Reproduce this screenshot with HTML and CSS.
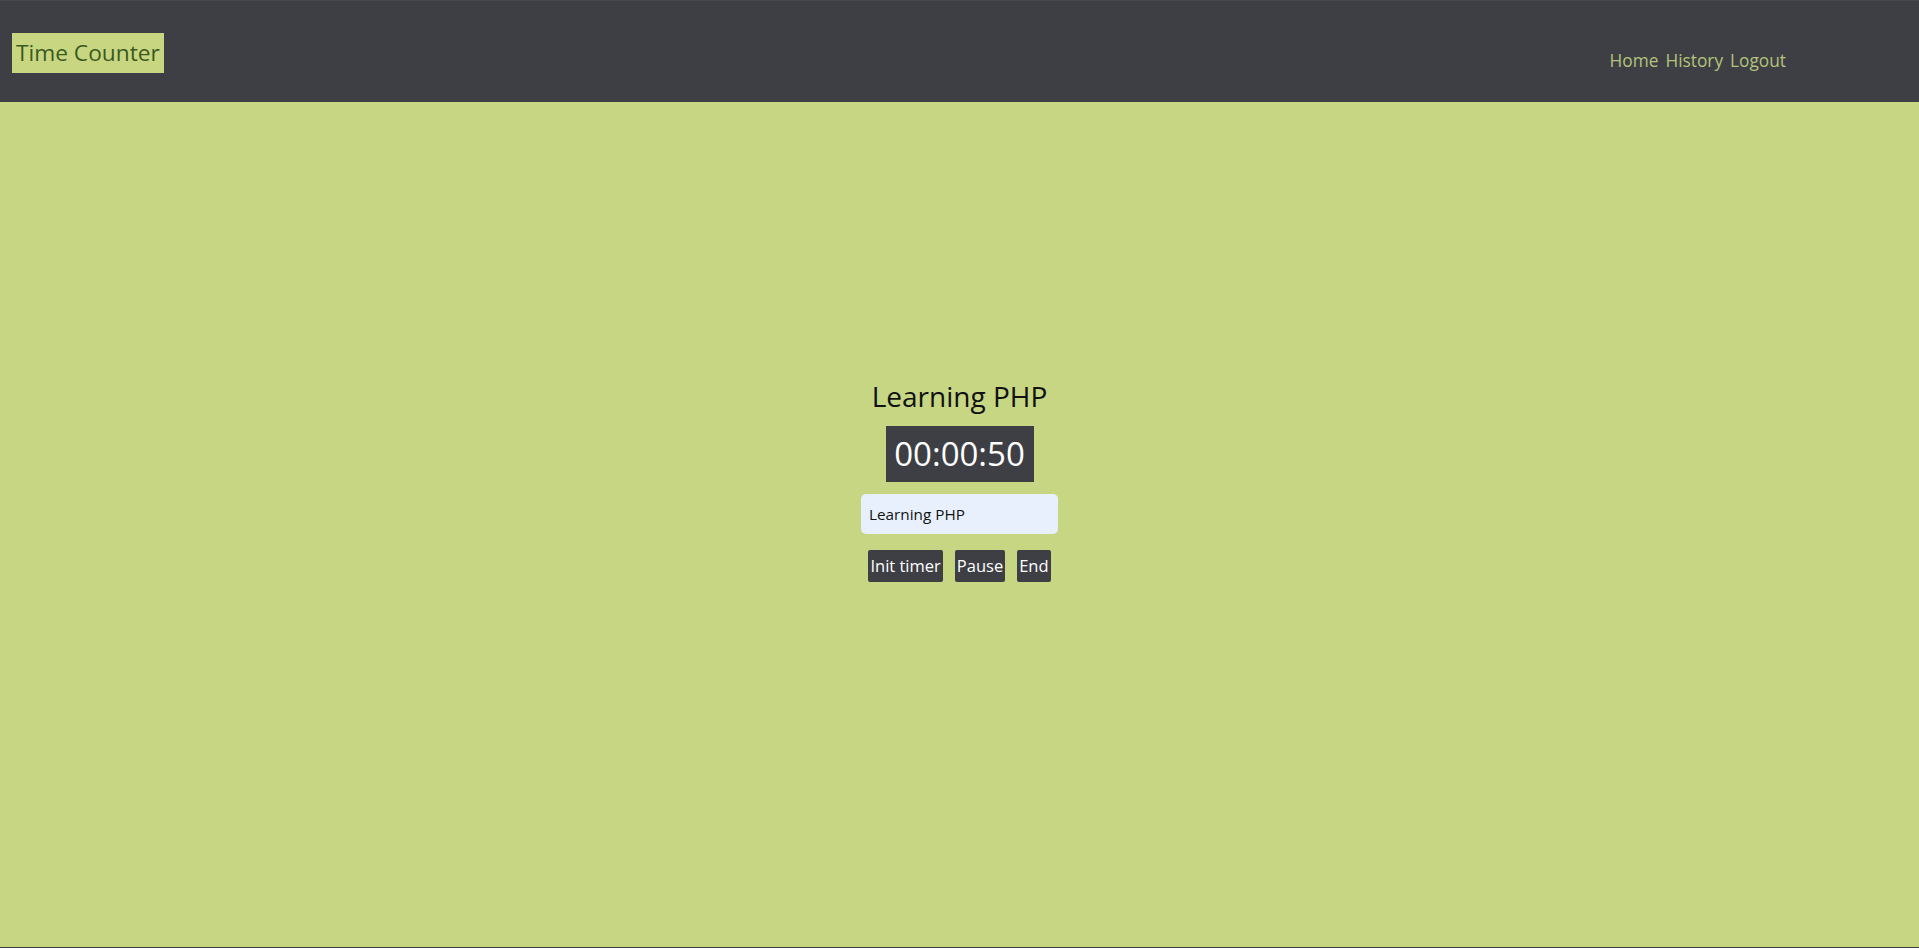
FILE: index.html
```html
<!DOCTYPE html>
<html lang="en">
<head>
<meta charset="utf-8">
<title>Time Counter</title>
<link rel="stylesheet" href="styles.css">
</head>
<body>
<header class="topbar">
  <div class="brand">Time Counter</div>
  <nav class="nav">
    <a href="#" class="nav-link">Home</a>
    <a href="#" class="nav-link">History</a>
    <a href="#" class="nav-link">Logout</a>
  </nav>
</header>
<main class="main">
  <section class="timer-card">
    <h1 class="task-title">Learning PHP</h1>
    <div class="clock">00:00:50</div>
    <input class="task-input" type="text" value="Learning PHP">
    <div class="actions">
      <button class="btn">Init timer</button>
      <button class="btn">Pause</button>
      <button class="btn">End</button>
    </div>
  </section>
</main>
</body>
</html>
```
FILE: styles.css
```css
* { box-sizing: border-box; }
html, body { margin: 0; height: 100%; }
body {
  display: flex;
  flex-direction: column;
  background: #3e3f45;
  font-family: "Open Sans", "Noto Sans", sans-serif;
}
.topbar {
  height: 102px;
  flex: none;
  display: flex;
  align-items: center;
  justify-content: space-between;
  padding: 0 133px 0 12px;
  background: #3e3f45;
  border-top: 1px solid #47484d;
}
.brand {
  height: 40px;
  margin-top: 2px;
  padding: 0 4px;
  display: flex;
  align-items: center;
  background: #c8d682;
  color: #3a5a1f;
  font-size: 22.7px;
}
.nav {
  display: flex;
  gap: 7px;
  margin-top: 17px;
}
.nav-link {
  color: #b3c47a;
  text-decoration: none;
  font-size: 17.3px;
}
.main {
  flex: 1;
  margin-bottom: 1px;
  background: #c7d683;
  display: flex;
  align-items: center;
  justify-content: center;
  padding-bottom: 90px;
}
.timer-card {
  display: flex;
  flex-direction: column;
  align-items: center;
}
.task-title {
  margin: 0 0 12px;
  font-weight: 400;
  font-size: 28px;
  line-height: 36px;
  color: #111;
}
.clock {
  width: 148px;
  height: 56px;
  display: flex;
  align-items: center;
  justify-content: center;
  background: #3e3f45;
  color: #fff;
  font-size: 33px;
}
.task-input {
  margin-top: 12px;
  width: 197px;
  height: 40px;
  border: none;
  border-radius: 5px;
  background: #e8f0fe;
  padding: 0 8px;
  font-family: inherit;
  font-size: 15.3px;
  color: #111;
  outline: none;
}
.actions {
  display: flex;
  gap: 12px;
  margin-top: 16px;
}
.btn {
  height: 32px;
  padding: 0 2px;
  border: none;
  border-radius: 2px;
  background: #3e3f45;
  color: #fff;
  font-family: inherit;
  font-size: 16.5px;
  cursor: pointer;
}
```
